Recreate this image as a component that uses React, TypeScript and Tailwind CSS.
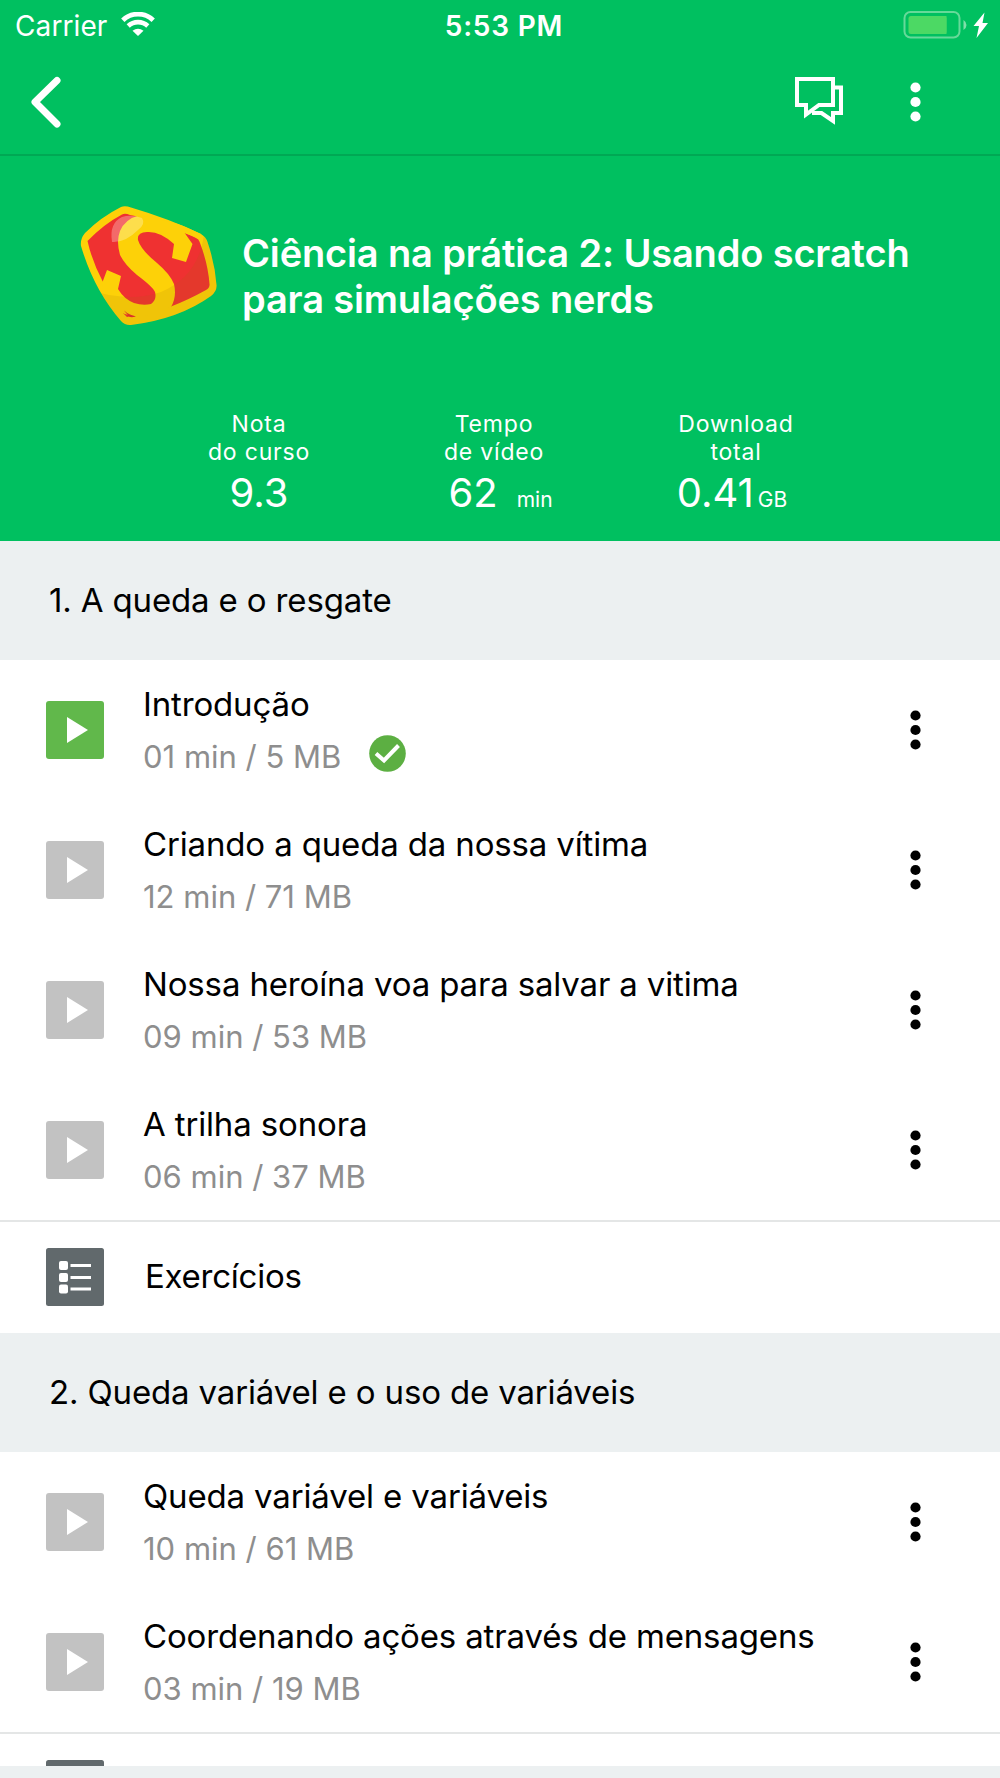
import React from 'react';

interface Video {
  title: string;
  meta: string;
  done?: boolean;
}

interface Section {
  title: string;
  videos: Video[];
}

const sections: Section[] = [
  {
    title: '1. A queda e o resgate',
    videos: [
      { title: 'Introdução', meta: '01 min / 5 MB', done: true },
      { title: 'Criando a queda da nossa vítima', meta: '12 min / 71 MB' },
      { title: 'Nossa heroína voa para salvar a vitima', meta: '09 min / 53 MB' },
      { title: 'A trilha sonora', meta: '06 min / 37 MB' },
    ],
  },
  {
    title: '2. Queda variável e o uso de variáveis',
    videos: [
      { title: 'Queda variável e variáveis', meta: '10 min / 61 MB' },
      { title: 'Coordenando ações através de mensagens', meta: '03 min / 19 MB' },
    ],
  },
];

const Dots = () => (
  <svg className="-mt-px h-10 w-[11px]" viewBox="0 0 11 40" fill="currentColor">
    <circle cx="5.5" cy="5.5" r="5.1" />
    <circle cx="5.5" cy="20" r="5.1" />
    <circle cx="5.5" cy="34.5" r="5.1" />
  </svg>
);

const StatusBar = () => (
  <div className="grid h-[50px] grid-cols-3 items-center text-[28px] leading-[50px]">
    <div className="flex items-center pl-[15px]">
      <span className="pt-0.5 leading-[48px] tracking-[0.1px]">Carrier</span>
      <svg className="ml-3.5 -mt-0.5 h-6 w-[34px]" viewBox="0 0 34 24" fill="none" stroke="#fff">
        <path d="M1.8 8.2 A22 22 0 0 1 32.2 8.2" strokeWidth="4.8" />
        <path d="M7.2 14 A14.3 14.3 0 0 1 26.8 14" strokeWidth="4.6" />
        <path d="M11.5 18.7 Q17 14.6 22.5 18.7 L17 24 Z" fill="#fff" stroke="none" />
      </svg>
    </div>
    <div className="pt-0.5 pl-2 text-center leading-[48px] font-[560] tracking-[0.8px]">5:53 PM</div>
    <div className="flex justify-end pr-3">
      <svg className="h-7 w-[86px]" viewBox="0 0 86 28" fill="none">
        <rect x="2.5" y="1" width="55" height="25.5" rx="6" stroke="#66d999" strokeWidth="2" />
        <rect x="6.5" y="5" width="38" height="18" rx="2.5" fill="#4cd964" />
        <path d="M44.500 5h-6v18h6z" fill="#4cd964" />
        <path d="M61.500 9q3 2 3 5t-3 5z" fill="#80dfaa" />
        <path d="M82.500 1.500 L71.5 15 H77 L74.5 27 L86 12 H80.500 Z" fill="#fff" />
      </svg>
    </div>
  </div>
);

const NavBar = () => (
  <div className="flex h-[106px] items-center justify-between border-b-2 border-[#00a854] pr-[79px] pl-[30px]">
    <svg className="-mt-px h-[52px] w-8" viewBox="0 0 32 52" fill="none">
      <path d="M27 4.5 L5 26 L27 48" stroke="#fff" strokeWidth="7" strokeLinecap="round" strokeLinejoin="round" />
    </svg>
    <div className="flex items-center">
      <svg className="-mt-0.5 mr-[67px] h-12 w-12" viewBox="0 0 48 48" fill="none" stroke="#fff" strokeWidth="4">
        <path d="M2 2 H38 V28 H24 L11 37.5 V28 H2 Z" />
        <path d="M39 10.5 H46 V36 H38 V44 L26.5 36 H17" />
      </svg>
      <Dots />
    </div>
  </div>
);

const ScratchBadge = () => (
  <svg className="h-[120px] w-[138px] shrink-0" viewBox="0 0 138 120">
    <defs>
      <clipPath id="badge">
        <path d="M41 1 Q45 -.5 51 1.5 Q90 13 121 28 Q126 31 127.5 36 Q135 58 136.500 79 Q137 85 131 90 Q99 113 51 119 Q45 119.500 41 115 Q14 84 1 40 Q0 33 5 27 Q21 11 41 1Z" />
      </clipPath>
    </defs>
    <g clipPath="url(#badge)">
      <path d="M0 0H138V120H0Z" fill="#fdd108" />
      <path d="M42 8.500 Q45 7 50 9 L60 11 L115 31 Q119 33 120 37 Q128 58 129.500 78 Q130 82 126 84 Q108 94 91 100.500 L47 111 L42 106 L22.500 75 Q12 55 7.500 35 Q24 18 42 8.500Z" fill="#ef3131" />
      <path
        d="M60 9 Q45 13 40 25 Q36 35 40 49 Q45 59 57 69 Q73 81 75 86 Q77 94 71 98 Q63 100 54 97 Q44 93 38 83 L41 70 L27 64 L22.500 76 L23 87 L40 106 Q52 112 68 109 L91 101 Q97 91 94 78 Q90 68 77 57 Q61 44 58 34 Q57 26 67 26 Q80 25 94 38 L92 52 L106 56 L112.500 38 L104 26 L118 33 L124 24 Z"
        fill="#fdd108"
      />
      <path d="M44 104.500 Q49 109 56 110.500 Q51 112 49 110.500Z" fill="#e32d2d" />
      <path d="M0 81 Q46 98 81 86 Q119 70 124 28 H138 V120 H0Z" fill="#9a7010" opacity=".13" />
      <path d="M32 36 Q29 17 42 11 Q51 8 62 12 Q66 18 58 24 Q45 37 32 36Z" fill="#fff" opacity=".28" />
    </g>
  </svg>
);

const Stat = ({ label, value, unit, unitClass, className }: { label: [string, string], value: string, unit?: string, unitClass?: string, className: string }) => (
  <div className={`flex flex-col items-center ${className}`}>
    <span className="text-[23px] leading-7 tracking-[0.8px]">{label[0]}</span>
    <span className="text-[23px] leading-7 tracking-[0.8px]">{label[1]}</span>
    <div className="flex items-baseline leading-[54px]">
      <span className="text-[40px]">{value}</span>
      {unit && <span className={`text-[21px] ${unitClass}`}>{unit}</span>}
    </div>
  </div>
);

const CourseHeader = () => (
  <div className="h-[385px]">
    <div className="flex pt-[50px] pl-[80px]">
      <ScratchBadge />
      <h1 className="mt-[24px] ml-6 text-[38px] leading-[46px] font-[570] tracking-[-0.15px] whitespace-nowrap">
        Ciência na prática 2: Usando scratch
        <br />
        para simulações nerds
      </h1>
    </div>
    <div className="mt-[84px] flex">
      <Stat className="ml-[184px] w-[150px]" label={['Nota', 'do curso']} value="9.3" />
      <Stat className="ml-[85px] w-[150px]" label={['Tempo', 'de vídeo']} value="62" unit="min" unitClass="ml-[19px] -mr-[13px]" />
      <Stat className="ml-[92px] w-[150px]" label={['Download', 'total']} value="0.41" unit="GB" unitClass="ml-1 mr-2" />
    </div>
  </div>
);

const SectionTitle = ({ children }: { children: React.ReactNode }) => (
  <h2 className="flex h-[119px] items-center bg-[#ecf0f1] pl-[49px] text-[33px] tracking-[-0.15px]">{children}</h2>
);

const VideoRow = ({ video }: { video: Video }) => (
  <div className="flex h-[140px] items-center pr-[79px] pl-[46px]">
    <div className={`flex size-[58px] items-center justify-center rounded-[3px] ${video.done ? 'bg-[#61b84b]' : 'bg-[#c2c2c2]'}`}>
      <svg className="ml-1 h-[26px] w-[21px]" viewBox="0 0 21 26" fill="#fff">
        <path d="M0 0 L21 13 L0 26 Z" />
      </svg>
    </div>
    <div className="ml-[39px] flex-1">
      <p className="text-[33px] leading-[52px] tracking-[-0.15px]">{video.title}</p>
      <div className="flex items-center pt-px">
        <span className="text-[31px] leading-[52px] text-[#8e8e8e]">{video.meta}</span>
        {video.done && (
          <svg className="-mt-1.5 ml-7 size-[37px]" viewBox="0 0 37 37" fill="none">
            <circle cx="18.500" cy="18.500" r="18.300" fill="#5caf42" />
            <path d="M7 18.500 L15 25.500 L29.500 10.500" stroke="#fff" strokeWidth="4" />
          </svg>
        )}
      </div>
    </div>
    <Dots />
  </div>
);

// peek: the row is scrolled mostly out of view, only the top of the icon shows
const ExercisesRow = ({ peek }: { peek?: boolean }) => (
  <div className="flex h-[113px] items-center border-t-2 border-[#e4e6e6] pb-0.5 pl-[46px]">
    <svg className="size-[58px]" viewBox="0 0 58 58">
      <rect width="58" height="58" rx="2.500" fill="#61696c" />
      {[13, 25, 36.5].map((y) => (
        <g key={y} fill="#fff">
          <rect x="13" y={y} width="9" height="9" rx="2" />
          <rect x="24.500" y={y + 3} width="20.500" height="3" />
        </g>
      ))}
    </svg>
    {!peek && <span className="ml-[41px] text-[33px] tracking-[-0.25px]">Exercícios</span>}
  </div>
);

export default function App() {
  return (
    <div className="flex h-[1778px] w-[1000px] flex-col overflow-hidden bg-white font-[Inter,sans-serif] text-black">
      <header className="shrink-0 bg-[#00c060] text-white">
        <StatusBar />
        <NavBar />
        <CourseHeader />
      </header>
      <main className="h-[1225px] shrink-0 overflow-hidden">
        {sections.map((section, i) => (
          <section key={section.title}>
            <SectionTitle>{section.title}</SectionTitle>
            {section.videos.map((video) => (
              <VideoRow key={video.title} video={video} />
            ))}
            <ExercisesRow peek={i === sections.length - 1} />
          </section>
        ))}
      </main>
      <div className="flex-1 bg-[#ecf0f1]" />
    </div>
  );
}
